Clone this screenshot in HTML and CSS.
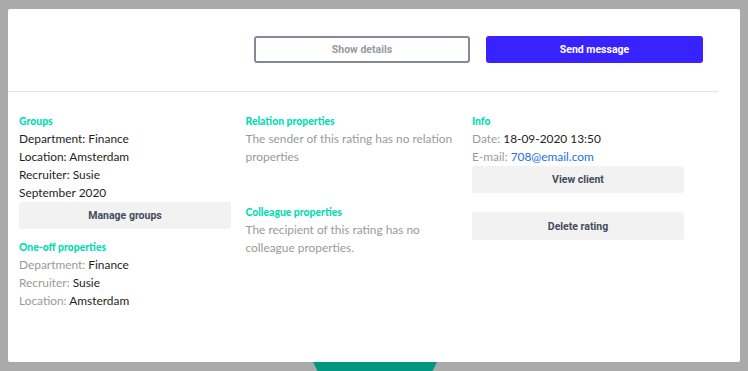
FILE: index.html
```html
<!DOCTYPE html>
<html lang="en">
<head>
    <meta charset="UTF-8">
    <title>Rating</title>
    <link rel="stylesheet" href="styles.css">
</head>
<body>
    <div class="backdrop-shape"></div>
    <div class="modal">
        <div class="modal-head">
            <button class="btn btn-outline">Show details</button>
            <button class="btn btn-primary">Send message</button>
        </div>
        <div class="modal-body">
            <div class="col">
                <h4>Groups</h4>
                <p>Department: Finance</p>
                <p>Location: Amsterdam</p>
                <p>Recruiter: Susie</p>
                <p>September 2020</p>
                <button class="btn btn-light">Manage groups</button>
                <h4 class="gap-s">One-off properties</h4>
                <p><span class="label">Department:</span> Finance</p>
                <p><span class="label">Recruiter:</span> Susie</p>
                <p><span class="label">Location:</span> Amsterdam</p>
            </div>
            <div class="col">
                <h4>Relation properties</h4>
                <p class="muted">The sender of this rating has no relation properties</p>
                <h4 class="gap-l">Colleague properties</h4>
                <p class="muted">The recipient of this rating has no colleague properties.</p>
            </div>
            <div class="col">
                <h4>Info</h4>
                <p><span class="label">Date:</span> 18-09-2020 13:50</p>
                <p><span class="label">E-mail:</span> <a href="#">708@email.com</a></p>
                <button class="btn btn-light">View client</button>
                <button class="btn btn-light btn-delete">Delete rating</button>
            </div>
        </div>
    </div>
</body>
</html>
```
FILE: styles.css
```css
html,body{
    margin:0;
    height:371px;
    overflow:hidden;
}
body{
    background:#aaaaaa;
    font-family:"Lato","Open Sans",sans-serif;
    position:relative;
    padding-top:9px;
    box-sizing:border-box;
}
/*teal shape behind the modal*/
.backdrop-shape{
    position:absolute;
    left:300px;
    top:340px;
    width:150px;
    height:31px;
    background:#009680;
    clip-path:polygon(2px 0,148px 0,132.5px 31px,17.5px 31px);
}
.modal{
    position:relative;
    z-index:1;
    width:732px;
    height:353px;
    margin:0 8px;
    background:#fff;
    border-radius:2px;
}
.modal-head{
    display:flex;
    justify-content:flex-end;
    gap:16px;
    padding:27px 15px 0 0;
    height:83px;
    border-bottom:1px solid #e4e4e4;
    margin-right:22px;
    box-sizing:border-box;
}
.btn{
    font-family:"Roboto",sans-serif;
    font-weight:bold;
    font-size:10.5px;
    height:27px;
    border-radius:3px;
    border:none;
    cursor:pointer;
    padding:0;
}
.btn-outline{
    width:216px;
    background:#fff;
    border:2px solid #818a9b;
    color:#9a9a9a;
}
.btn-primary{
    width:217px;
    background:#3822ff;
    color:#fff;
}
.modal-body{
    display:grid;
    grid-template-columns:212px 212px 212px;
    column-gap:14.5px;
    padding:20px 0 0 11px;
}
.col h4{
    margin:0;
    font-size:10.4px;
    line-height:18px;
    font-weight:900;
    color:#00dcb3;
}
.col p{
    margin:0;
    font-size:11.9px;
    line-height:18px;
    color:#1e1e1e;
}
.col p.muted{
    color:#9a9a9a;
}
.label{
    color:#9a9a9a;
}
.col a{
    color:#1b6fe8;
    text-decoration:none;
}
.btn-light{
    display:block;
    width:212px;
    background:#f2f2f2;
    color:#454c5b;
}
.btn-delete{
    margin-top:19px;
    height:28px;
}
.gap-s{
    margin-top:9px !important;
}
.gap-l{
    margin-top:37px !important;
}
```
